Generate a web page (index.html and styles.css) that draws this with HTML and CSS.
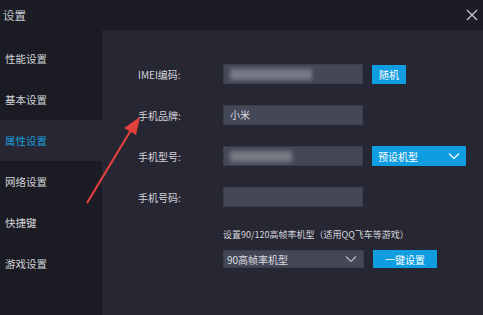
FILE: index.html
```html
<!DOCTYPE html>
<html lang="zh">
  <head>
    <meta charset="UTF-8" />
    <title>设置</title>
    <link rel="stylesheet" href="styles.css">
  </head>
  <body>
    <div class="window">
      <div class="titlebar">
        <span class="title">设置</span>
        <svg class="close" width="12" height="12" viewBox="0 0 12 12">
          <path d="M1 1L11 11M11 1L1 11" stroke="#c8c9ce" stroke-width="1.3" fill="none" />
        </svg>
      </div>

      <div class="main">
        <ul class="sidebar">
          <li>性能设置</li>
          <li>基本设置</li>
          <li class="active">属性设置</li>
          <li>网络设置</li>
          <li>快捷键</li>
          <li>游戏设置</li>
        </ul>

        <div class="content">
          <div class="row">
            <label>IMEI编码:</label>
            <div class="input"><span class="blur wide"></span></div>
            <button class="btn small">随机</button>
          </div>
          <div class="row">
            <label>手机品牌:</label>
            <div class="input">小米</div>
          </div>
          <div class="row">
            <label>手机型号:</label>
            <div class="input"><span class="blur"></span></div>
            <div class="btn dropdown">
              预设机型
              <svg width="12" height="8" viewBox="0 0 12 8">
                <path d="M1 1.5L6 6.5L11 1.5" stroke="#fff" stroke-width="1.2" fill="none" />
              </svg>
            </div>
          </div>
          <div class="row">
            <label>手机号码:</label>
            <div class="input"></div>
          </div>

          <div class="fps">
            <p class="note">设置90/120高帧率机型（适用QQ飞车等游戏）</p>
            <div class="fps-row">
              <div class="select">
                90高帧率机型
                <svg width="12" height="8" viewBox="0 0 12 8">
                  <path d="M1 1.5L6 6.5L11 1.5" stroke="#b5b7c0" stroke-width="1.2" fill="none" />
                </svg>
              </div>
              <button class="btn wide-btn">一键设置</button>
            </div>
          </div>
        </div>
      </div>

      <svg class="arrow" width="483" height="315" viewBox="0 0 483 315">
        <line x1="87" y1="203" x2="131" y2="130" stroke="#e0413d" stroke-width="2.2" />
        <polygon points="140,117 124,128 136,135" fill="#e0413d" />
      </svg>
    </div>
  </body>
</html>
```

FILE: styles.css
```css
* {
  margin: 0;
  padding: 0;
  box-sizing: border-box;
}

body {
  font-family: "Noto Sans CJK SC", "Noto Sans", sans-serif;
  background: #1b1c24;
  width: 483px;
  height: 315px;
  overflow: hidden;
}

.window {
  position: relative;
  width: 483px;
  height: 315px;
  display: flex;
  flex-direction: column;
}

.titlebar {
  height: 30px;
  background: #1b1c24;
  display: flex;
  align-items: center;
  justify-content: space-between;
  padding: 0 3px 0 3px;
}

.title {
  color: #c9cad0;
  font-size: 11.5px;
}

.close {
  margin-right: 2px;
}

.main {
  flex: 1;
  display: flex;
}

.sidebar {
  list-style: none;
  width: 102px;
  background: #1b1c23;
  padding-top: 8px;
}

.sidebar li {
  height: 41px;
  line-height: 41px;
  padding-left: 5px;
  color: #d4d5da;
  font-size: 10.5px;
}

.sidebar li.active {
  background: #262733;
  color: #1b9ddd;
}

.content {
  flex: 1;
  background: #262733;
  padding: 34px 0 0 36px;
}

.row {
  display: flex;
  align-items: center;
  height: 20px;
  margin-bottom: 21px;
}

.row label {
  width: 85px;
  color: #d4d5da;
  font-size: 10px;
}

.input {
  width: 140px;
  height: 20px;
  background: #444756;
  border: 1px solid #3a3d4a;
  color: #dcdde2;
  font-size: 10px;
  line-height: 18px;
  padding-left: 6px;
  display: flex;
  align-items: center;
}

.blur {
  display: block;
  width: 62px;
  height: 11px;
  background: #777a85;
  filter: blur(2px);
}

.blur.wide {
  width: 82px;
}

.btn {
  margin-left: 9px;
  background: #0e9de0;
  color: #fff;
  border: none;
  font-family: inherit;
  font-size: 10px;
}

.btn.small {
  width: 34px;
  height: 19px;
}

.dropdown {
  width: 94px;
  height: 20px;
  display: flex;
  align-items: center;
  justify-content: space-between;
  padding: 0 6px 0 6px;
}

.fps {
  margin-top: 8px;
}

.note {
  color: #d4d5da;
  font-size: 9px;
  margin-left: 85px;
  height: 14px;
  line-height: 14px;
}

.fps-row {
  display: flex;
  align-items: center;
  margin-left: 85px;
  margin-top: 8px;
}

.select {
  width: 141px;
  height: 18px;
  background: #444756;
  border: 1px solid #3a3d4a;
  color: #dcdde2;
  font-size: 10px;
  display: flex;
  align-items: center;
  justify-content: space-between;
  padding: 0 6px 0 3px;
}

.btn.wide-btn {
  margin-left: 9px;
  width: 64px;
  height: 18px;
}

.arrow {
  position: absolute;
  left: 0;
  top: 0;
  pointer-events: none;
}
```
